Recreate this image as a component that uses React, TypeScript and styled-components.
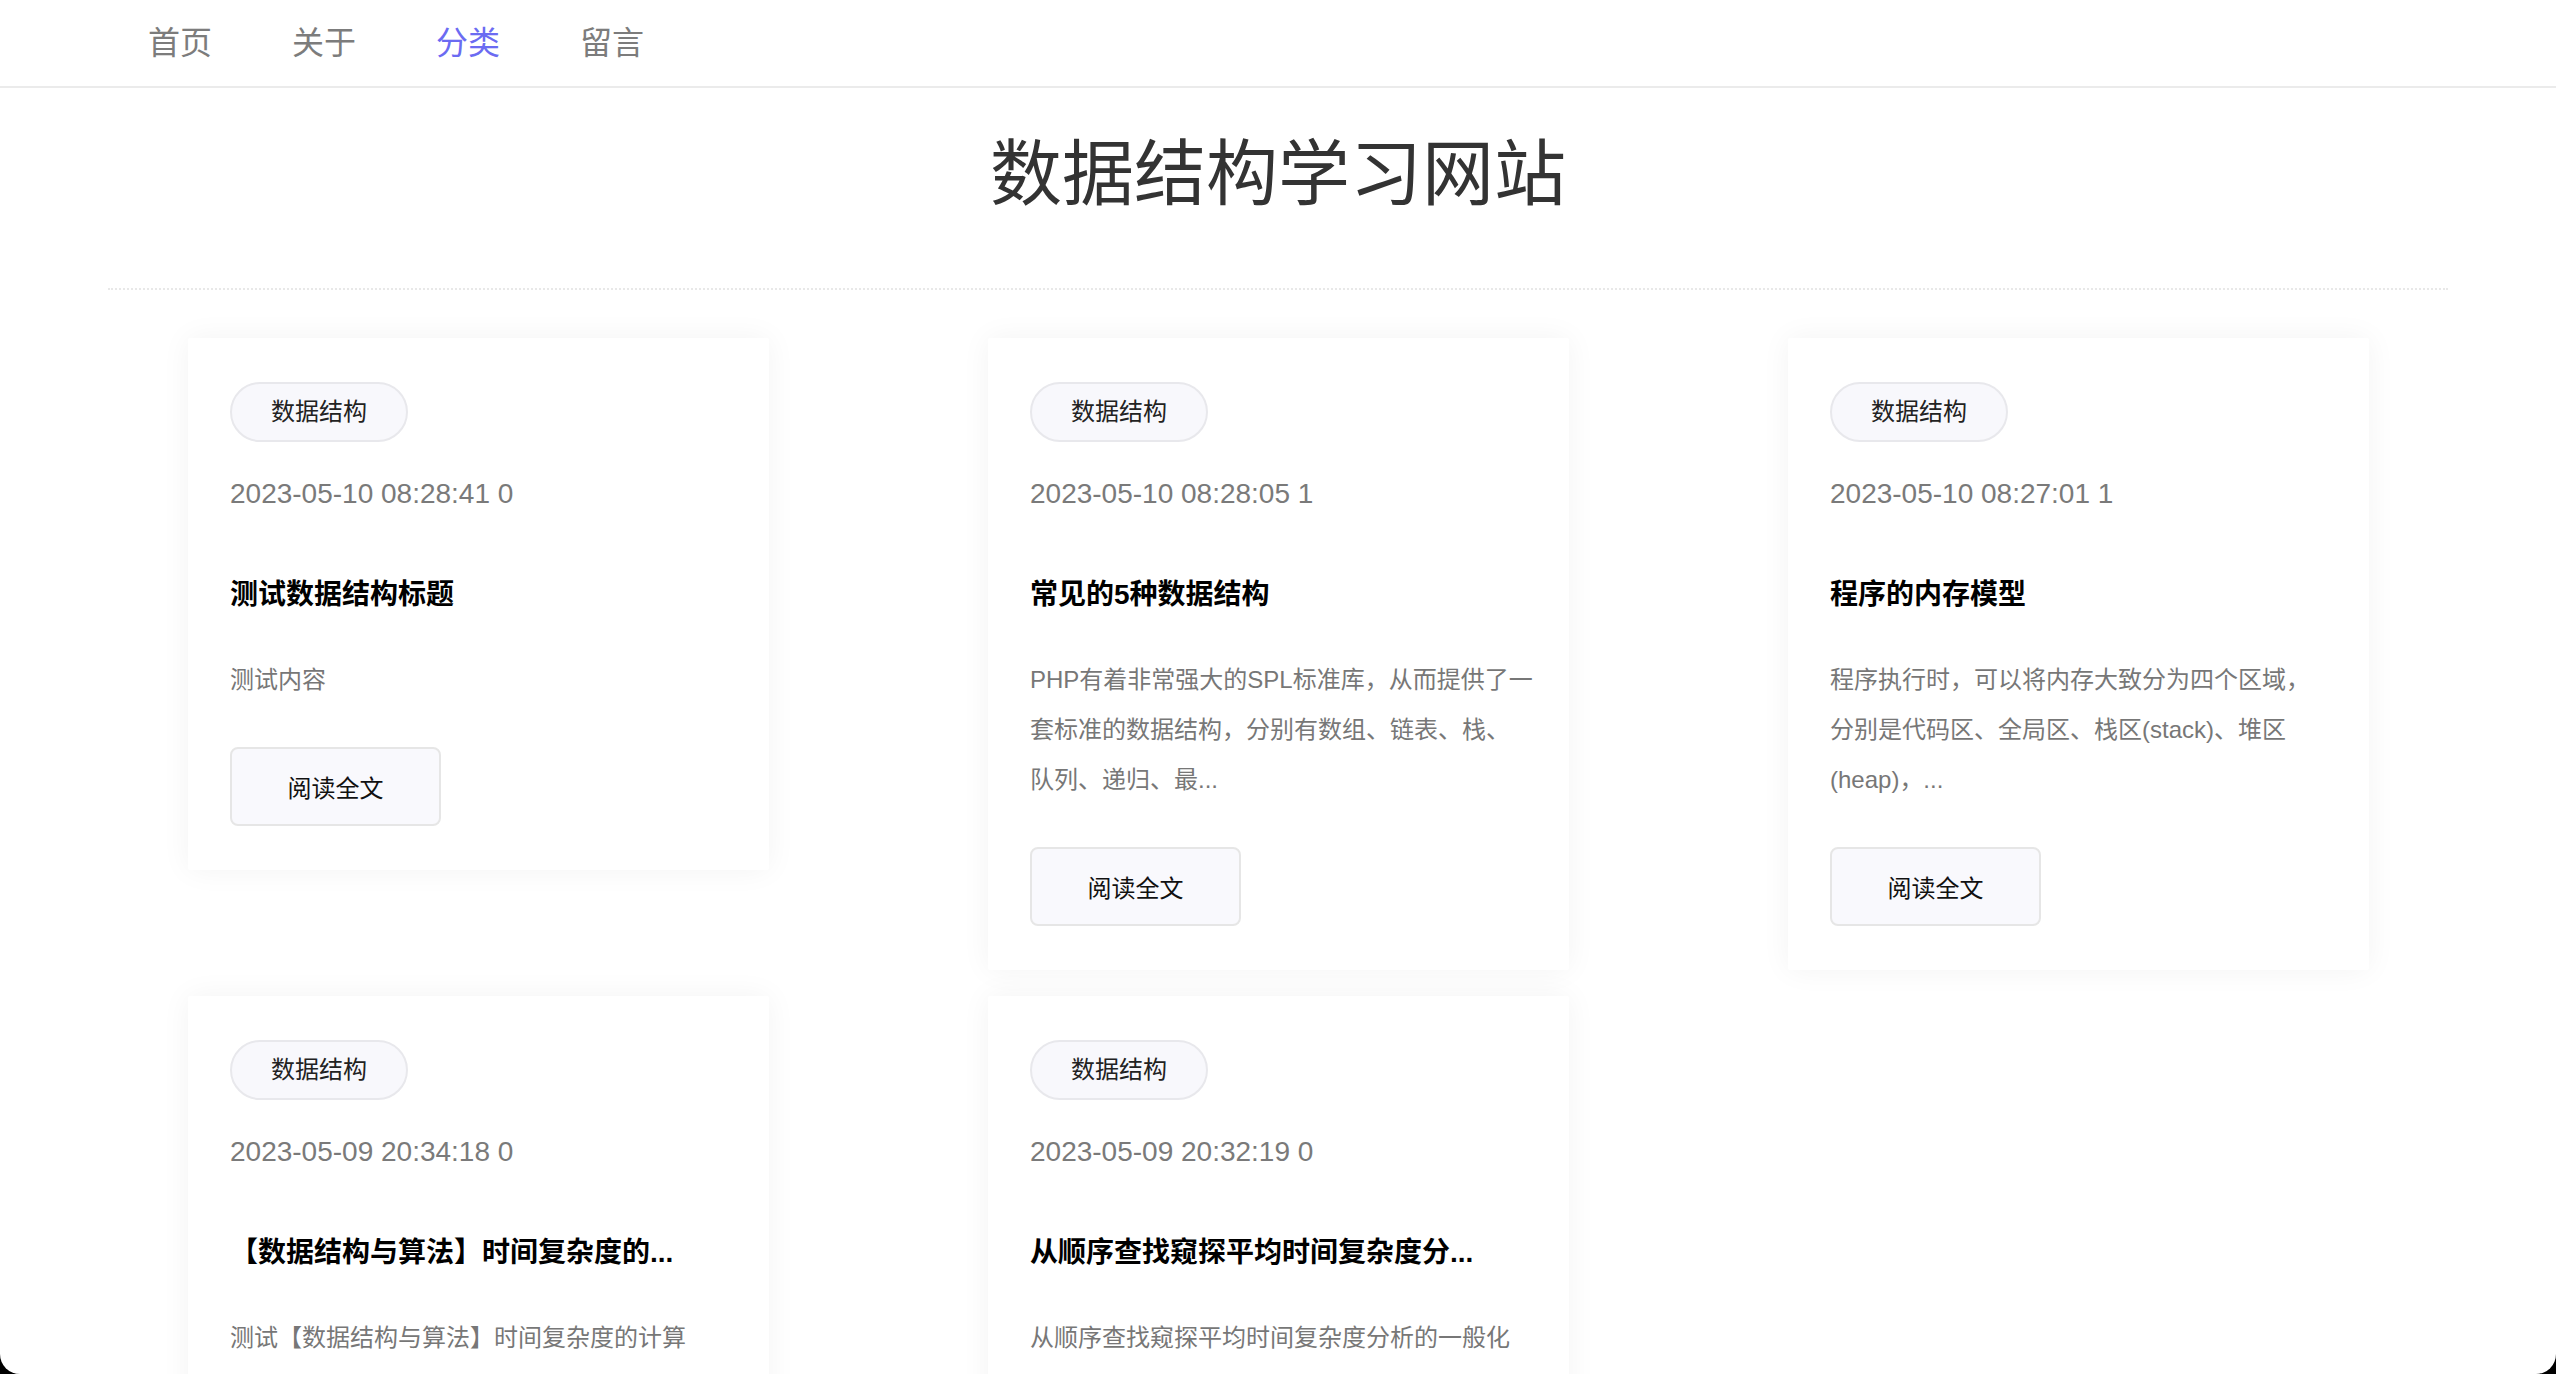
import React from "react";
import styled, { createGlobalStyle } from "styled-components";

const GlobalStyle = createGlobalStyle`
    html, body {
        margin: 0;
        padding: 0;
        background: #000;
    }
    body {
        font-family: "Liberation Sans", "Noto Sans CJK SC", sans-serif;
    }
`;

const Page = styled.div`
    height: 100vh;
    overflow: hidden;
    background: #fff;
    border-radius: 0 0 20px 20px;
`;

const Nav = styled.nav`
    display: flex;
    align-items: center;
    gap: 80px;
    height: 86px;
    padding-left: 148px;
    border-bottom: 2px solid #ebebeb;
`;

const NavItem = styled.a<{ $active?: boolean }>`
    font-size: 32px;
    line-height: 86px;
    color: ${(p) => (p.$active ? "#6b6bf2" : "#7c7c7c")};
    text-decoration: none;
    cursor: pointer;
`;

const Header = styled.header`
    padding-top: 36px;
    text-align: center;
`;

const SiteTitle = styled.h1`
    margin: 0;
    font-size: 72px;
    font-weight: 400;
    line-height: 100px;
    color: #333;
`;

const Divider = styled.div`
    margin: 64px 108px 0;
    border-top: 2px dotted #e8e8e8;
`;

const Grid = styled.main`
    display: grid;
    grid-template-columns: repeat(3, 581px);
    column-gap: 219px;
    row-gap: 26px;
    align-items: start;
    padding: 48px 0 0 188px;
`;

const Card = styled.article`
    display: flex;
    flex-direction: column;
    align-items: flex-start;
    padding: 44px 35.5px 44px 42px;
    background: #fff;
    border-radius: 2px;
    box-shadow: 0 0 30px rgba(0, 0, 0, 0.05);
`;

const Tag = styled.span`
    box-sizing: border-box;
    height: 60px;
    padding: 0 39px;
    border: 2px solid #e8e8ec;
    border-radius: 30px;
    background: #f8f8fc;
    font-size: 24px;
    line-height: 56px;
    color: #222;
`;

const Meta = styled.div`
    margin-top: 31px;
    font-size: 28px;
    line-height: 42px;
    color: #7a7a7a;
`;

const CardTitle = styled.h2`
    margin: 59px 0 0;
    font-size: 28px;
    font-weight: 700;
    line-height: 42px;
    color: #000;
`;

const Summary = styled.p`
    margin: 39px 0 0;
    font-size: 24px;
    line-height: 50px;
    color: #777;
`;

const ReadButton = styled.button`
    box-sizing: border-box;
    width: 211px;
    height: 79px;
    margin-top: 42px;
    border: 2px solid #e6e6e6;
    border-radius: 8px;
    background: #f9f9fd;
    font-family: inherit;
    font-size: 24px;
    color: #111;
    cursor: pointer;
`;

const navItems = ["首页", "关于", "分类", "留言"];

const posts = [
    {
        time: "2023-05-10 08:28:41",
        views: 0,
        title: "测试数据结构标题",
        summary: "测试内容",
    },
    {
        time: "2023-05-10 08:28:05",
        views: 1,
        title: "常见的5种数据结构",
        summary: "PHP有着非常强大的SPL标准库，从而提供了一套标准的数据结构，分别有数组、链表、栈、队列、递归、最...",
    },
    {
        time: "2023-05-10 08:27:01",
        views: 1,
        title: "程序的内存模型",
        summary: "程序执行时，可以将内存大致分为四个区域，分别是代码区、全局区、栈区(stack)、堆区(heap)，...",
    },
    {
        time: "2023-05-09 20:34:18",
        views: 0,
        title: "【数据结构与算法】时间复杂度的...",
        summary: "测试【数据结构与算法】时间复杂度的计算",
    },
    {
        time: "2023-05-09 20:32:19",
        views: 0,
        title: "从顺序查找窥探平均时间复杂度分...",
        summary: "从顺序查找窥探平均时间复杂度分析的一般化",
    },
];

export default function App() {
    return (
        <>
            <GlobalStyle />
            <Page>
                <Nav>
                    {navItems.map((item) => (
                        <NavItem key={item} $active={item === "分类"}>
                            {item}
                        </NavItem>
                    ))}
                </Nav>
                <Header>
                    <SiteTitle>数据结构学习网站</SiteTitle>
                </Header>
                <Divider />
                <Grid>
                    {posts.map((post) => (
                        <Card key={post.time}>
                            <Tag>数据结构</Tag>
                            <Meta>
                                {post.time} {post.views}
                            </Meta>
                            <CardTitle>{post.title}</CardTitle>
                            <Summary>{post.summary}</Summary>
                            <ReadButton>阅读全文</ReadButton>
                        </Card>
                    ))}
                </Grid>
            </Page>
        </>
    );
}
